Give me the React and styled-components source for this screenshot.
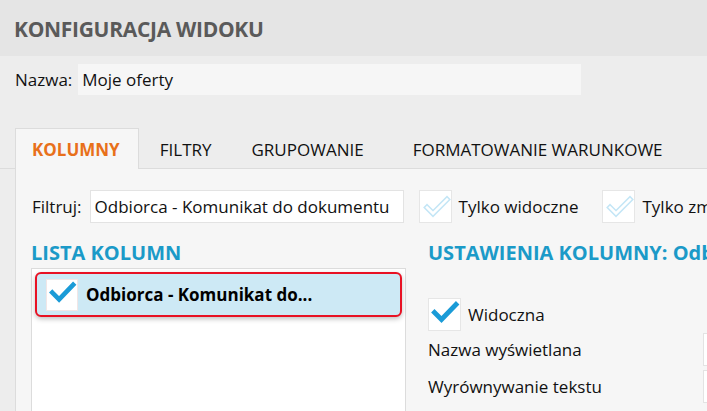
import React from "react";
import styled, { createGlobalStyle } from "styled-components";

const GlobalStyle = createGlobalStyle`
  html, body {
    margin: 0;
    padding: 0;
    background: #ededed;
  }
  body {
    font-family: "Open Sans", "Noto Sans", sans-serif;
    color: #111;
  }
`;

const Page = styled.div`
  width: 707px;
  height: 411px;
  overflow: hidden;
  background: #ededed;
  display: flex;
  flex-direction: column;
`;

const Header = styled.div`
  height: 56px;
  flex: none;
  background: #e5e5e5;
  display: flex;
  align-items: center;
  padding-left: 14px;
  padding-top: 2px;
  box-sizing: border-box;
`;

const Title = styled.div`
  font-size: 21px;
  font-weight: 700;
  color: #5a5a5a;
  letter-spacing: -0.3px;
`;

const NameRow = styled.div`
  display: flex;
  align-items: center;
  gap: 6px;
  padding: 8px 15px 0;
  font-size: 17px;
`;

const NameInput = styled.div`
  width: 499px;
  height: 31px;
  background: #f6f6f6;
  display: flex;
  align-items: center;
  padding-left: 4px;
`;

const TabBar = styled.div`
  margin-top: 33px;
  display: flex;
  height: 40px;
  padding-left: 15px;
  border-bottom: 1px solid #dcdcdc;
  flex: none;
`;

const Tab = styled.div`
  display: flex;
  align-items: center;
  padding: 0 ${(p) => p.$pad}px 0 ${(p) => p.$left}px;
  font-size: 17px;
  white-space: nowrap;
  color: ${(p) => (p.$active ? "#e8701a" : "#111")};
  font-weight: ${(p) => (p.$active ? 700 : 400)};
  background: ${(p) => (p.$active ? "#f6f6f6" : "transparent")};
  border: 1px solid ${(p) => (p.$active ? "#dcdcdc" : "transparent")};
  border-bottom: none;
  box-sizing: border-box;
  margin-bottom: -1px;
  height: 41px;
`;

const Content = styled.div`
  flex: 1;
  margin-left: 15px;
  background: #f6f6f6;
  border-left: 1px solid #dcdcdc;
  padding: 21px 0 0 16px;
  white-space: nowrap;
  overflow: hidden;
`;

const FilterRow = styled.div`
  display: flex;
  align-items: center;
  font-size: 17px;

  & > * {
    flex: none;
  }
`;

const FilterInput = styled.div`
  margin-left: 8px;
  width: 314px;
  height: 33px;
  box-sizing: border-box;
  background: #fff;
  border: 1px solid #e3e3e3;
  display: flex;
  align-items: center;
  padding-left: 4px;
`;

const Check = styled.div`
  width: 33px;
  height: 33px;
  flex: none;
  box-sizing: border-box;
  background: #fff;
  border: 1px solid #e6e6e6;
  display: flex;
  align-items: center;
  justify-content: center;
  margin-left: ${(p) => p.$ml || 0}px;
`;

const CheckLabel = styled.span`
  margin-left: 7px;
  font-size: 17px;
`;

const Columns = styled.div`
  display: flex;
  gap: 22px;
  margin-top: 18px;
`;

const LeftCol = styled.div`
  width: 375px;
  flex: none;
  margin-left: -1px;
`;

const RightCol = styled.div`
  display: flex;
  flex-direction: column;
`;

const SectionTitle = styled.div`
  font-size: 20px;
  font-weight: 700;
  color: #1b9ac8;
  height: 27px;
  line-height: 24px;
`;

const ListBox = styled.div`
  background: #fff;
  border: 1px solid #dcdcdc;
  height: 200px;
  padding: 3px;
  box-sizing: border-box;
`;

const ListItem = styled.div`
  height: 45px;
  box-sizing: border-box;
  background: #cde9f5;
  border: 2px solid #e81123;
  border-radius: 6px;
  box-shadow: 0 2px 5px rgba(0, 0, 0, 0.25);
  display: flex;
  align-items: center;
  padding-left: 9px;
`;

const ItemCheck = styled(Check)`
  width: 32px;
  height: 32px;
  border: 1px solid #f1e6e6;
`;

const ItemText = styled.span`
  margin-left: 8px;
  font-size: 17px;
  font-weight: 700;
  color: #000;
`;

const VisibleRow = styled.div`
  display: flex;
  align-items: center;
  margin-top: 30px;
`;

const FieldRow = styled.div`
  display: flex;
  align-items: center;
  height: 37px;
  font-size: 17px;
`;

const FieldLabel = styled.span`
  width: 275px;
  flex: none;
`;

const FieldInput = styled.div`
  width: 60px;
  height: 33px;
  flex: none;
  box-sizing: border-box;
  background: #fff;
  border: 1px solid #e3e3e3;
`;

const BlueCheck = () => (
  <svg width="31" height="31" viewBox="0 0 31 31">
    <path
      d="M5.5 13.5 L12.5 20.5 L27 5.5"
      fill="none"
      stroke="#1a9bd7"
      strokeWidth="4.8"
      strokeLinecap="square"
    />
  </svg>
);

const LightCheck = () => (
  <svg width="31" height="31" viewBox="0 0 31 31">
    <path
      d="M7 16.5 L13 22.5 L27 8.5"
      fill="none"
      stroke="#c4e6f6"
      strokeWidth="5.5"
      strokeLinecap="square"
    />
    <path
      d="M7 16.5 L13 22.5 L27 8.5"
      fill="none"
      stroke="#fff"
      strokeWidth="2.5"
      strokeLinecap="square"
    />
  </svg>
);

export default function App() {
  return (
    <Page>
      <GlobalStyle />
      <Header>
        <Title>KONFIGURACJA WIDOKU</Title>
      </Header>
      <NameRow>
        <span>Nazwa:</span>
        <NameInput>Moje oferty</NameInput>
      </NameRow>
      <TabBar>
        <Tab $active $left={16} $pad={18}>KOLUMNY</Tab>
        <Tab $left={20} $pad={19}>FILTRY</Tab>
        <Tab $left={19} $pad={27}>GRUPOWANIE</Tab>
        <Tab $left={20} $pad={20}>FORMATOWANIE WARUNKOWE</Tab>
      </TabBar>
      <Content>
        <FilterRow>
          <span>Filtruj:</span>
          <FilterInput>Odbiorca - Komunikat do dokumentu</FilterInput>
          <Check $ml={15}>
            <LightCheck />
          </Check>
          <CheckLabel>Tylko widoczne</CheckLabel>
          <Check $ml={24}>
            <LightCheck />
          </Check>
          <CheckLabel>Tylko zmienione</CheckLabel>
        </FilterRow>
        <Columns>
          <LeftCol>
            <SectionTitle>LISTA KOLUMN</SectionTitle>
            <ListBox>
              <ListItem>
                <ItemCheck>
                  <BlueCheck />
                </ItemCheck>
                <ItemText>Odbiorca - Komunikat do...</ItemText>
              </ListItem>
            </ListBox>
          </LeftCol>
          <RightCol>
            <SectionTitle>USTAWIENIA KOLUMNY: Odbiorca - Komunikat do dokumentu</SectionTitle>
            <VisibleRow>
              <Check>
                <BlueCheck />
              </Check>
              <CheckLabel>Widoczna</CheckLabel>
            </VisibleRow>
            <FieldRow>
              <FieldLabel>Nazwa wyświetlana</FieldLabel>
              <FieldInput />
            </FieldRow>
            <FieldRow>
              <FieldLabel>Wyrównywanie tekstu</FieldLabel>
              <FieldInput />
            </FieldRow>
          </RightCol>
        </Columns>
      </Content>
    </Page>
  );
}
